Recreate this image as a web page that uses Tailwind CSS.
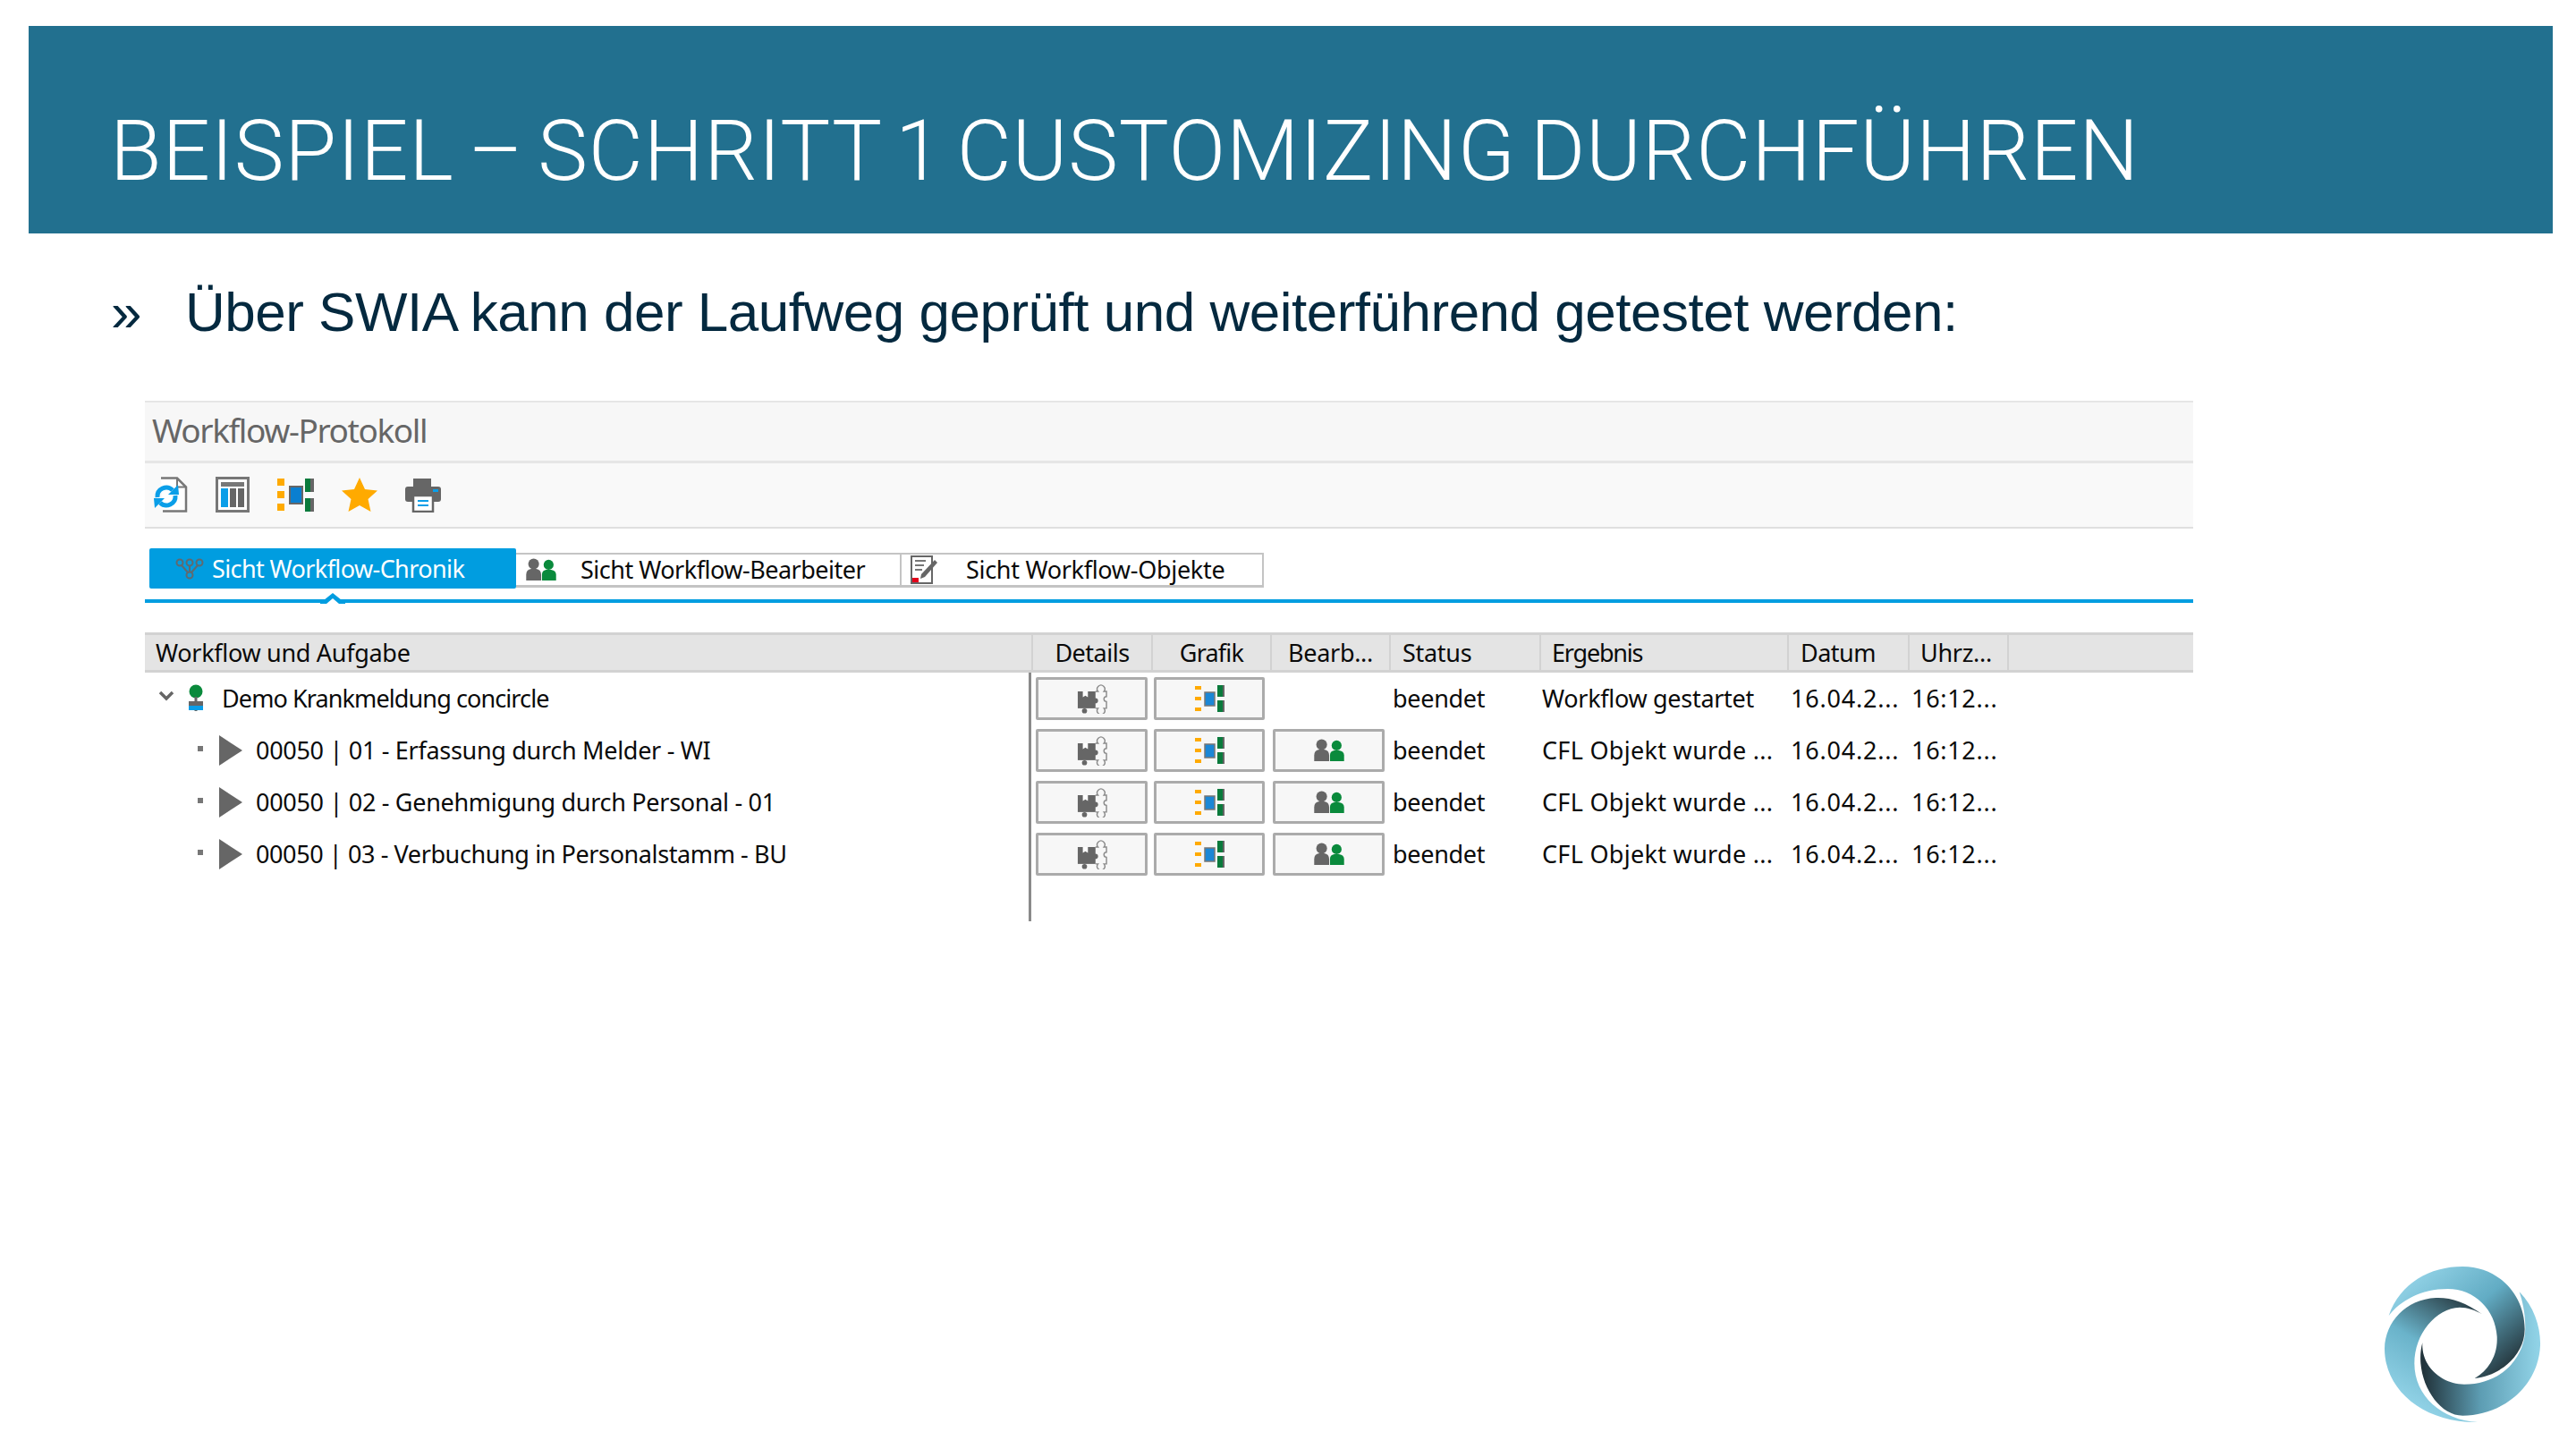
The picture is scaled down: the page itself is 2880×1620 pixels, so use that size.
<!DOCTYPE html>
<html lang="de">
<head>
  <meta charset="UTF-8" />
  <title>Beispiel - Schritt 1 Customizing durchführen</title>
  <script src="https://cdn.jsdelivr.net/npm/@tailwindcss/browser@4"></script>
</head>
<body class="bg-white">
  <svg width="0" height="0" class="absolute">
    <defs>
      <symbol id="i-grafik" viewBox="0 0 41 38">
        <rect x="0" y="1" width="8" height="8" fill="#ffaa00" />
        <rect x="0" y="15" width="8" height="8" fill="#ffaa00" />
        <rect x="0" y="29" width="8" height="8" fill="#ffaa00" />
        <rect x="14" y="10" width="14" height="19" fill="#0a7fd0" stroke="#666" stroke-width="2" />
        <rect x="31" y="1" width="10" height="15" fill="#666" />
        <rect x="31" y="1" width="6" height="15" fill="#0a7a3c" />
        <rect x="31" y="23" width="10" height="15" fill="#666" />
        <rect x="31" y="23" width="6" height="15" fill="#0a7a3c" />
      </symbol>
      <symbol id="i-grafik-sm" viewBox="0 0 33 30">
        <rect x="0" y="1" width="7" height="4" fill="#ffaa00" />
        <rect x="0" y="13" width="7" height="4" fill="#ffaa00" />
        <rect x="0" y="25" width="7" height="4" fill="#ffaa00" />
        <rect x="11" y="8" width="11" height="15" fill="#1b87d6" stroke="#777" stroke-width="1.500" />
        <rect x="25" y="0" width="8" height="13" fill="#666" />
        <rect x="25" y="0" width="6" height="13" fill="#0a7a3c" />
        <rect x="25" y="17" width="8" height="13" fill="#666" />
        <rect x="25" y="17" width="6" height="13" fill="#0a7a3c" />
      </symbol>
      <symbol id="i-users" viewBox="0 0 36 28">
        <circle cx="9" cy="7" r="6.500" fill="#666" />
        <path d="M0 27v-7q0-6 6-7h6q6 1 6 7v7z" fill="#666" />
        <circle cx="27" cy="8" r="6" fill="#0a8a3c" />
        <path d="M19 27v-7q0-5 5-6h6q6 1 6 6v7z" fill="#0a8a3c" />
      </symbol>
      <symbol id="i-details" viewBox="0 0 36 34">
        <path d="M1 8h21v20H1z" fill="#666" />
        <path d="M7 8v7l3-2 3 2V8z" fill="#fff" />
        <circle cx="9" cy="31" r="3" fill="#666" />
        <path d="M22 8h3a4.500 4.500 0 1 1 7 0h3v6a3 3 0 1 0 0 6v8h-3a4.500 4.500 0 1 1-7 0h-3" fill="none" stroke="#8a8a8a" stroke-width="1.500" />
        <circle cx="22" cy="19" r="3" fill="#666" />
      </symbol>
    </defs>
  </svg>

  <div class="relative w-[2880px] h-[1620px] overflow-hidden pt-[29px]">
    <header class="ml-[32px] w-[2822px] h-[232px] bg-[#22708f] flex items-center pl-[91px] pt-[48px]">
      <h1 class="font-['Roboto','Liberation_Sans',sans-serif] font-light text-[94px] leading-none text-white tracking-[0.85px] [word-spacing:-8px] whitespace-nowrap">BEISPIEL – SCHRITT 1 CUSTOMIZING DURCHFÜHREN</h1>
    </header>

    <div class="flex items-center h-[104px] mt-[36px] ml-[124px] font-['Liberation_Sans',sans-serif] text-[62px] leading-none text-[#04293f]">
      <span class="w-[83px]">»</span>
      <span class="tracking-[-0.5px] whitespace-nowrap">Über SWIA kann der Laufweg geprüft und weiterführend getestet werden:</span>
    </div>

    <section class="ml-[162px] mt-[47px] w-[2290px] font-['Noto_Sans',sans-serif] text-[27px] text-[#0a0a0a]">
      <div class="h-[70px] bg-[#f7f7f7] border-t-2 border-b-[3px] border-[#e6e6e6] flex items-center pl-[8px] pb-[3px]">
        <span class="text-[37px] text-[#666] tracking-[-1.4px]">Workflow-Protokoll</span>
      </div>

      <div class="h-[73px] bg-[#f9f9f9] border-b-2 border-[#e0e0e0] flex items-center pl-[8px] gap-[31px] pb-[2px]">
        <svg class="w-[40px] h-[40px]" viewBox="0 0 40 40">
          <path d="M10 1.500h18l10 10v27H12" fill="#fff" stroke="#777" stroke-width="2.500" />
          <path d="M28 1.500v10h10" fill="none" stroke="#777" stroke-width="2" />
          <path d="M6 23a10 10 0 0 1 17-8" fill="none" stroke="#0a9ee8" stroke-width="5" />
          <path d="M18 20h12l-1-11z" fill="#0a9ee8" />
          <path d="M26 21a10 10 0 0 1-17 8" fill="none" stroke="#0a9ee8" stroke-width="5" />
          <path d="M14 24H2l1 11z" fill="#0a9ee8" />
        </svg>
        <svg class="w-[38px] h-[40px]" viewBox="0 0 38 40">
          <rect x="1.500" y="1.500" width="35" height="37" fill="#fff" stroke="#777" stroke-width="3" />
          <rect x="6" y="6" width="26" height="5" fill="#777" />
          <rect x="6" y="13" width="8" height="21" fill="#0a9ee8" />
          <rect x="16" y="13" width="7" height="21" fill="#666" />
          <rect x="25" y="13" width="7" height="21" fill="#666" />
        </svg>
        <svg class="w-[41px] h-[38px]"><use href="#i-grafik" /></svg>
        <svg class="w-[40px] h-[38px]" viewBox="0 0 40 38">
          <path d="M20 0l6 13 14 1.500-10.500 9.500 3 14L20 31l-12.500 7 3-14L0 14.500 14 13z" fill="#ffaa00" />
        </svg>
        <svg class="w-[40px] h-[40px]" viewBox="0 0 40 40">
          <path d="M9 2h20v9H9z" fill="#666" />
          <path d="M3 11h34q3 0 3 3v11q0 3-3 3H3q-3 0-3-3V14q0-3 3-3z" fill="#666" />
          <rect x="31" y="14" width="6" height="3" fill="#0a9ee8" />
          <rect x="9" y="21" width="22" height="18" fill="#fff" stroke="#666" stroke-width="2.500" />
          <path d="M14 27h12M14 32h12" stroke="#0a9ee8" stroke-width="2" />
        </svg>
      </div>

      <div class="h-[79px] pl-[5px] pt-[22px] flex items-start">
        <div class="w-[410px] h-[45px] bg-[#009de0] rounded-[2px] flex items-center pl-[29px] gap-[9px] pt-[1px] text-white">
          <svg class="w-[32px] h-[24px]" viewBox="0 0 32 24" fill="none" stroke="#5f6a70" stroke-width="2">
            <circle cx="5" cy="5" r="3.500" /><circle cx="16" cy="5" r="3.500" /><circle cx="27" cy="5" r="3.500" /><circle cx="16" cy="19" r="3.500" />
            <path d="M7 8l7 8M16 9v6M25 8l-7 8" />
          </svg>
          <span class="tracking-[-0.6px]">Sicht Workflow-Chronik</span>
        </div>
        <div class="mt-[5px] w-[431px] h-[39px] bg-white border-t-2 border-b-[3px] border-r-2 border-[#c4c4c4] flex items-center pl-[10px]">
          <svg class="w-[36px] h-[26px]"><use href="#i-users" /></svg>
          <span class="ml-[26px] tracking-[-0.5px]">Sicht Workflow-Bearbeiter</span>
        </div>
        <div class="mt-[5px] w-[405px] h-[39px] bg-white border-t-2 border-b-[3px] border-r-2 border-[#c4c4c4] flex items-center pl-[10px]">
          <svg class="w-[32px] h-[34px]" viewBox="0 0 32 34">
            <rect x="1" y="2" width="23" height="30" fill="#fff" stroke="#666" stroke-width="2" />
            <path d="M5 7h12M5 12h10M5 17h8" stroke="#777" stroke-width="2" />
            <path d="M27 6l3 3-14 16-5 2 1-5z" fill="#666" />
            <rect x="2" y="26" width="7" height="5" fill="#e2001a" />
          </svg>
          <span class="ml-[30px] tracking-[-0.3px]">Sicht Workflow-Objekte</span>
        </div>
      </div>

      <div class="relative h-[4px] bg-[#009de0]">
        <svg class="absolute left-[196px] top-[-9px] w-[28px] h-[14px]" viewBox="0 0 28 14">
          <path d="M0 10h4l10-8 10 8h4v4H0z" fill="#009de0" />
          <path d="M7 14l7-6 7 6z" fill="#fff" />
        </svg>
      </div>

      <div class="mt-[33px] h-[45px] bg-[#e4e4e4] border-t-[3px] border-b-[3px] border-[#d2d2d2] grid grid-cols-[991px_134px_133px_133px_168px_277px_135px_111px_208px] items-stretch leading-[39px]">
        <div class="pl-[12px] tracking-[-0.3px]">Workflow und Aufgabe</div>
        <div class="border-l-2 border-[#d2d2d2] text-center tracking-[-0.5px]">Details</div>
        <div class="border-l-2 border-[#d2d2d2] text-center tracking-[-0.8px]">Grafik</div>
        <div class="border-l-2 border-[#d2d2d2] text-center tracking-[-0.3px]">Bearb...</div>
        <div class="border-l-2 border-[#d2d2d2] pl-[13px] tracking-[-0.3px]">Status</div>
        <div class="border-l-2 border-[#d2d2d2] pl-[12px] tracking-[-1.2px]">Ergebnis</div>
        <div class="border-l-2 border-[#d2d2d2] pl-[13px] tracking-[-0.5px]">Datum</div>
        <div class="border-l-2 border-[#d2d2d2] pl-[12px] tracking-[-0.3px]">Uhrz...</div>
        <div class="border-l-2 border-[#d2d2d2]"></div>
      </div>

      <!-- Zeile 0: Workflow -->
      <div class="h-[58px] grid grid-cols-[991px_134px_133px_133px_168px_277px_135px_111px_208px] items-center tracking-[-0.3px] whitespace-nowrap">
        <div class="h-full border-r-[3px] border-[#8a8a8a] flex items-center pl-[15px]">
          <svg class="w-[18px] h-[12px] mb-[6px]" viewBox="0 0 18 12"><path d="M2 2l7 7 7-7" fill="none" stroke="#666" stroke-width="3.500" /></svg>
          <svg class="ml-[14px] w-[20px] h-[32px]" viewBox="0 0 20 32">
            <circle cx="10" cy="8" r="7.500" fill="#0a8a3c" />
            <rect x="8.500" y="14" width="3" height="16" fill="#666" />
            <rect x="2" y="19" width="16" height="5" fill="#666" />
            <rect x="2" y="24" width="16" height="5" fill="#0a9ee8" />
          </svg>
          <span class="ml-[19px] tracking-[-0.9px]">Demo Krankmeldung concircle</span>
        </div>
        <div class="pl-[5px]"><div class="w-[125px] h-[48px] bg-[#f7f7f7] border-[3px] border-[#ababab] rounded-[2px] flex items-center justify-center"><svg class="w-[34px] h-[33px]"><use href="#i-details" /></svg></div></div>
        <div class="pl-[3px]"><div class="w-[124px] h-[48px] bg-[#f7f7f7] border-[3px] border-[#ababab] rounded-[2px] flex items-center justify-center"><svg class="w-[33px] h-[30px]"><use href="#i-grafik-sm" /></svg></div></div>
        <div></div>
        <div class="pl-[4px]">beendet</div>
        <div class="pl-[3px]">Workflow gestartet</div>
        <div class="pl-[4px] tracking-[0.8px]">16.04.2...</div>
        <div class="pl-[4px] tracking-[0.7px]">16:12...</div>
      </div>

      <!-- Zeile 1 -->
      <div class="h-[58px] grid grid-cols-[991px_134px_133px_133px_168px_277px_135px_111px_208px] items-center tracking-[-0.3px] whitespace-nowrap">
        <div class="h-full border-r-[3px] border-[#8a8a8a] flex items-center pl-[59px]">
          <span class="w-[6px] h-[6px] bg-[#777] mb-[4px]"></span>
          <svg class="ml-[18px] w-[26px] h-[34px]" viewBox="0 0 26 34"><path d="M0 0l26 17L0 34z" fill="#666" /></svg>
          <span class="ml-[15px]">00050 | 01 - Erfassung durch Melder - WI</span>
        </div>
        <div class="pl-[5px]"><div class="w-[125px] h-[48px] bg-[#f7f7f7] border-[3px] border-[#ababab] rounded-[2px] flex items-center justify-center"><svg class="w-[34px] h-[33px]"><use href="#i-details" /></svg></div></div>
        <div class="pl-[3px]"><div class="w-[124px] h-[48px] bg-[#f7f7f7] border-[3px] border-[#ababab] rounded-[2px] flex items-center justify-center"><svg class="w-[33px] h-[30px]"><use href="#i-grafik-sm" /></svg></div></div>
        <div class="pl-[3px]"><div class="w-[125px] h-[48px] bg-[#f7f7f7] border-[3px] border-[#ababab] rounded-[2px] flex items-center justify-center"><svg class="w-[34px] h-[26px]"><use href="#i-users" /></svg></div></div>
        <div class="pl-[4px]">beendet</div>
        <div class="pl-[3px] tracking-[0.3px]">CFL Objekt wurde ...</div>
        <div class="pl-[4px] tracking-[0.8px]">16.04.2...</div>
        <div class="pl-[4px] tracking-[0.7px]">16:12...</div>
      </div>

      <!-- Zeile 2 -->
      <div class="h-[58px] grid grid-cols-[991px_134px_133px_133px_168px_277px_135px_111px_208px] items-center tracking-[-0.3px] whitespace-nowrap">
        <div class="h-full border-r-[3px] border-[#8a8a8a] flex items-center pl-[59px]">
          <span class="w-[6px] h-[6px] bg-[#777] mb-[4px]"></span>
          <svg class="ml-[18px] w-[26px] h-[34px]" viewBox="0 0 26 34"><path d="M0 0l26 17L0 34z" fill="#666" /></svg>
          <span class="ml-[15px]">00050 | 02 - Genehmigung durch Personal - 01</span>
        </div>
        <div class="pl-[5px]"><div class="w-[125px] h-[48px] bg-[#f7f7f7] border-[3px] border-[#ababab] rounded-[2px] flex items-center justify-center"><svg class="w-[34px] h-[33px]"><use href="#i-details" /></svg></div></div>
        <div class="pl-[3px]"><div class="w-[124px] h-[48px] bg-[#f7f7f7] border-[3px] border-[#ababab] rounded-[2px] flex items-center justify-center"><svg class="w-[33px] h-[30px]"><use href="#i-grafik-sm" /></svg></div></div>
        <div class="pl-[3px]"><div class="w-[125px] h-[48px] bg-[#f7f7f7] border-[3px] border-[#ababab] rounded-[2px] flex items-center justify-center"><svg class="w-[34px] h-[26px]"><use href="#i-users" /></svg></div></div>
        <div class="pl-[4px]">beendet</div>
        <div class="pl-[3px] tracking-[0.3px]">CFL Objekt wurde ...</div>
        <div class="pl-[4px] tracking-[0.8px]">16.04.2...</div>
        <div class="pl-[4px] tracking-[0.7px]">16:12...</div>
      </div>

      <!-- Zeile 3 -->
      <div class="h-[58px] grid grid-cols-[991px_134px_133px_133px_168px_277px_135px_111px_208px] items-center tracking-[-0.3px] whitespace-nowrap">
        <div class="h-full border-r-[3px] border-[#8a8a8a] flex items-center pl-[59px]">
          <span class="w-[6px] h-[6px] bg-[#777] mb-[4px]"></span>
          <svg class="ml-[18px] w-[26px] h-[34px]" viewBox="0 0 26 34"><path d="M0 0l26 17L0 34z" fill="#666" /></svg>
          <span class="ml-[15px] tracking-[-0.4px]">00050 | 03 - Verbuchung in Personalstamm - BU</span>
        </div>
        <div class="pl-[5px]"><div class="w-[125px] h-[48px] bg-[#f7f7f7] border-[3px] border-[#ababab] rounded-[2px] flex items-center justify-center"><svg class="w-[34px] h-[33px]"><use href="#i-details" /></svg></div></div>
        <div class="pl-[3px]"><div class="w-[124px] h-[48px] bg-[#f7f7f7] border-[3px] border-[#ababab] rounded-[2px] flex items-center justify-center"><svg class="w-[33px] h-[30px]"><use href="#i-grafik-sm" /></svg></div></div>
        <div class="pl-[3px]"><div class="w-[125px] h-[48px] bg-[#f7f7f7] border-[3px] border-[#ababab] rounded-[2px] flex items-center justify-center"><svg class="w-[34px] h-[26px]"><use href="#i-users" /></svg></div></div>
        <div class="pl-[4px]">beendet</div>
        <div class="pl-[3px] tracking-[0.3px]">CFL Objekt wurde ...</div>
        <div class="pl-[4px] tracking-[0.8px]">16.04.2...</div>
        <div class="pl-[4px] tracking-[0.7px]">16:12...</div>
      </div>

      <div class="h-[46px] w-[991px] border-r-[3px] border-[#8a8a8a]"></div>
    </section>

    <svg class="absolute left-[2640px] top-[1391px] w-[240px] h-[230px]" viewBox="0 0 720 690">
      <defs>
        <linearGradient id="g-top" gradientUnits="userSpaceOnUse" x1="180" y1="90" x2="470" y2="430">
          <stop offset="0" stop-color="#93d3e7" /><stop offset="0.5" stop-color="#62acc4" /><stop offset="1" stop-color="#26383f" />
        </linearGradient>
        <linearGradient id="g-left" gradientUnits="userSpaceOnUse" x1="390" y1="200" x2="170" y2="560">
          <stop offset="0" stop-color="#26383f" /><stop offset="0.5" stop-color="#6ab3ca" /><stop offset="1" stop-color="#95d5e9" />
        </linearGradient>
        <linearGradient id="g-right" gradientUnits="userSpaceOnUse" x1="210" y1="400" x2="590" y2="400">
          <stop offset="0" stop-color="#22343c" /><stop offset="0.5" stop-color="#5d9db3" /><stop offset="1" stop-color="#90d2e6" />
        </linearGradient>
      </defs>
      <path d="M92 240C130 130 230 75 340 75C460 75 548 170 548 285C548 370 470 440 380 450C430 420 458 370 455 310C450 220 380 150 290 150C200 150 130 190 92 240Z" fill="url(#g-top)" />
      <path d="M405 235C350 195 300 178 250 180C150 185 80 260 78 350C78 490 210 600 390 597C270 590 178 510 178 400C178 300 250 215 330 212C355 212 385 222 405 235Z" fill="url(#g-left)" />
      <path d="M205 330C200 410 270 470 345 470C470 470 550 380 550 280C550 230 540 190 530 160C580 210 602 280 600 340C595 470 480 575 340 575C250 575 175 440 205 330Z" fill="url(#g-right)" />
    </svg>
  </div>
</body>
</html>
